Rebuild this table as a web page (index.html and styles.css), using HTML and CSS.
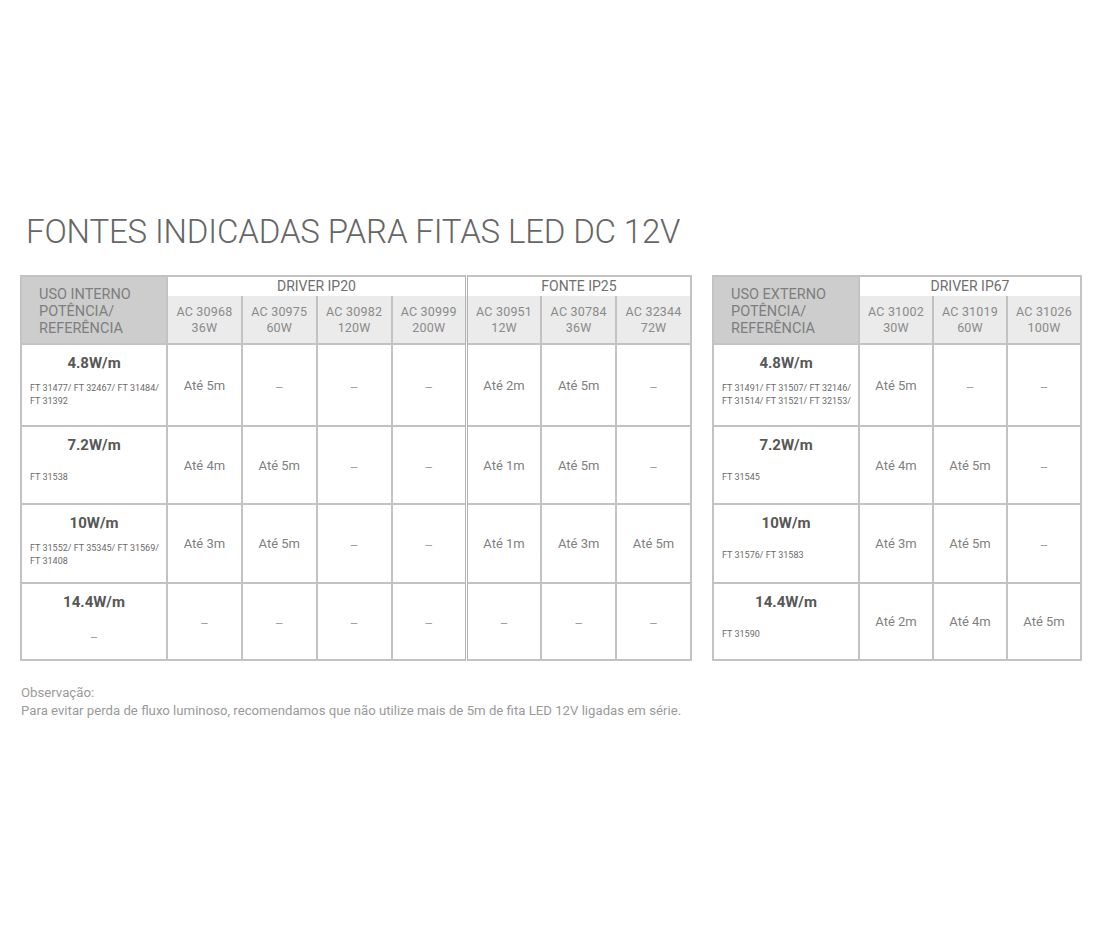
FILE: index.html
```html
<!DOCTYPE html>
<html lang="pt">
<head>
<meta charset="utf-8">
<title>Fontes indicadas para fitas LED DC 12V</title>
<link rel="stylesheet" href="styles.css">
</head>
<body>
<div class="page">
  <h1 class="title">FONTES INDICADAS PARA FITAS LED DC 12V</h1>
  <div class="tables">
    <table class="grid grid-int">
      <colgroup>
        <col class="c-first"><col class="c-val"><col class="c-val"><col class="c-val"><col class="c-val"><col class="c-val"><col class="c-val"><col class="c-val">
      </colgroup>
      <thead>
        <tr class="h-group">
          <th class="h-main" rowspan="2">USO INTERNO<br>POTÊNCIA/<br>REFERÊNCIA</th>
          <th colspan="4" class="grp-end">DRIVER IP20</th>
          <th colspan="3">FONTE IP25</th>
        </tr>
        <tr class="h-sub">
          <th>AC 30968<br>36W</th>
          <th>AC 30975<br>60W</th>
          <th>AC 30982<br>120W</th>
          <th class="grp-end">AC 30999<br>200W</th>
          <th>AC 30951<br>12W</th>
          <th>AC 30784<br>36W</th>
          <th>AC 32344<br>72W</th>
        </tr>
      </thead>
      <tbody>
        <tr class="r1">
          <td class="ref"><div class="pw">4.8W/m</div><div class="ft">FT 31477/ FT 32467/ FT 31484/<br>FT 31392</div></td>
          <td>Até 5m</td><td class="dash">–</td><td class="dash">–</td><td class="dash grp-end">–</td>
          <td>Até 2m</td><td>Até 5m</td><td class="dash">–</td>
        </tr>
        <tr class="r2">
          <td class="ref"><div class="pw">7.2W/m</div><div class="ft">FT 31538</div></td>
          <td>Até 4m</td><td>Até 5m</td><td class="dash">–</td><td class="dash grp-end">–</td>
          <td>Até 1m</td><td>Até 5m</td><td class="dash">–</td>
        </tr>
        <tr class="r3">
          <td class="ref"><div class="pw">10W/m</div><div class="ft">FT 31552/ FT 35345/ FT 31569/<br>FT 31408</div></td>
          <td>Até 3m</td><td>Até 5m</td><td class="dash">–</td><td class="dash grp-end">–</td>
          <td>Até 1m</td><td>Até 3m</td><td>Até 5m</td>
        </tr>
        <tr class="r4">
          <td class="ref"><div class="pw">14.4W/m</div><div class="ft ft-center">–</div></td>
          <td class="dash">–</td><td class="dash">–</td><td class="dash">–</td><td class="dash grp-end">–</td>
          <td class="dash">–</td><td class="dash">–</td><td class="dash">–</td>
        </tr>
      </tbody>
    </table>

    <table class="grid grid-ext">
      <colgroup>
        <col class="c-first"><col class="c-val"><col class="c-val"><col class="c-val">
      </colgroup>
      <thead>
        <tr class="h-group">
          <th class="h-main" rowspan="2">USO EXTERNO<br>POTÊNCIA/<br>REFERÊNCIA</th>
          <th colspan="3">DRIVER IP67</th>
        </tr>
        <tr class="h-sub">
          <th>AC 31002<br>30W</th>
          <th>AC 31019<br>60W</th>
          <th>AC 31026<br>100W</th>
        </tr>
      </thead>
      <tbody>
        <tr class="r1">
          <td class="ref"><div class="pw">4.8W/m</div><div class="ft">FT 31491/ FT 31507/ FT 32146/<br>FT 31514/ FT 31521/ FT 32153/</div></td>
          <td>Até 5m</td><td class="dash">–</td><td class="dash">–</td>
        </tr>
        <tr class="r2">
          <td class="ref"><div class="pw">7.2W/m</div><div class="ft">FT 31545</div></td>
          <td>Até 4m</td><td>Até 5m</td><td class="dash">–</td>
        </tr>
        <tr class="r3">
          <td class="ref"><div class="pw">10W/m</div><div class="ft">FT 31576/ FT 31583</div></td>
          <td>Até 3m</td><td>Até 5m</td><td class="dash">–</td>
        </tr>
        <tr class="r4">
          <td class="ref"><div class="pw">14.4W/m</div><div class="ft">FT 31590</div></td>
          <td>Até 2m</td><td>Até 4m</td><td>Até 5m</td>
        </tr>
      </tbody>
    </table>
  </div>
  <div class="note">
    <p>Observação:</p>
    <p>Para evitar perda de fluxo luminoso, recomendamos que não utilize mais de 5m de fita LED 12V ligadas em série.</p>
  </div>
</div>
</body>
</html>
```

FILE: styles.css
```css
html, body {
  margin: 0;
  padding: 0;
  background: #ffffff;
}

body {
  font-family: Roboto, "Liberation Sans", Arial, sans-serif;
  color: #777777;
}

.page {
  padding: 212px 0 0 20px;
}

.title {
  margin: 0 0 0 6px;
  font-size: 33px;
  line-height: 40px;
  font-weight: 300;
  color: #666666;
  letter-spacing: -0.15px;
  white-space: nowrap;
}

.tables {
  display: flex;
  align-items: flex-start;
  gap: 20px;
  margin-top: 23px;
}

.grid {
  border-collapse: collapse;
  table-layout: fixed;
  border: 2px solid #bdbdbd;
}

.grid-int { width: 672px; }
.grid-ext { width: 370px; }

.c-first { width: 146px; }

.grid th,
.grid td {
  border: 2px solid #c3c3c3;
  padding: 0;
  text-align: center;
  font-weight: 400;
}

.grid .grp-end {
  border-right: 3px double #b5b5b5;
}

.h-group th {
  height: 19px;
  font-size: 14px;
  line-height: 17px;
  color: #6f6f6f;
  border-bottom: none;
  background: #ffffff;
}

.h-group th.h-main {
  background: #cdcdcd;
  color: #7e7e7e;
  text-align: left;
  vertical-align: top;
  padding: 9px 0 0 17px;
  font-size: 14.5px;
  line-height: 17px;
  border-bottom: 2px solid #c3c3c3;
}

.h-sub th {
  height: 47px;
  background: #ebebeb;
  font-size: 12.5px;
  line-height: 16px;
  color: #8a8a8a;
  border-top: none;
  letter-spacing: 0.2px;
}

.grid td {
  font-size: 13px;
  color: #808080;
  vertical-align: middle;
}

.grid td.dash {
  color: #a0a0a0;
  padding-top: 4px;
}

.r1 td.ref { height: 72px; }
.r2 td.ref { height: 68px; }
.r3 td.ref { height: 69px; }
.r4 td.ref { height: 67px; }

.grid td.ref {
  vertical-align: top;
  text-align: left;
  padding: 8px 0 0 8px;
}

.pw {
  font-size: 15px;
  line-height: 20px;
  font-weight: 700;
  color: #575757;
  text-align: center;
  padding-right: 8px;
}

.ft {
  display: flex;
  align-items: center;
  height: 28px;
  margin-top: 8px;
  font-size: 9px;
  line-height: 13px;
  color: #6a6a6a;
  white-space: nowrap;
}

.ft-center {
  justify-content: center;
  padding-right: 8px;
  padding-top: 4px;
  font-size: 12px;
  color: #a0a0a0;
}

.note {
  margin-top: 23px;
  margin-left: 1px;
  font-size: 13.2px;
  line-height: 18px;
  color: #9a9a9a;
}

.note p {
  margin: 0;
}
```
